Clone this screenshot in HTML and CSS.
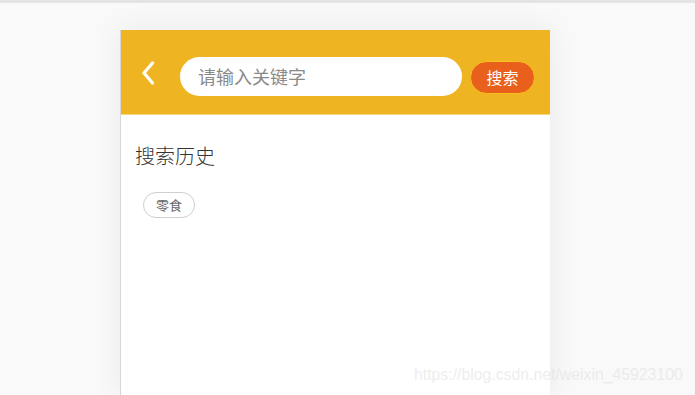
FILE: index.html
```html
<!DOCTYPE html>
<html lang="zh">
<head>
<meta charset="utf-8">
<link rel="stylesheet" href="styles.css">
</head>
<body>
<div class="topbar"></div>
<div class="page">
  <div class="card">
    <div class="header">
      <svg class="back" width="14" height="24" viewBox="0 0 14 24"><path d="M11.5 2 L3 12 L11.5 22" fill="none" stroke="#fff" stroke-width="3.2" stroke-linecap="round" stroke-linejoin="round"/></svg>
      <div class="search-input">请输入关键字</div>
      <div class="search-btn">搜索</div>
    </div>
    <div class="content">
      <div class="title">搜索历史</div>
      <div class="tags"><span class="tag">零食</span></div>
    </div>
  </div>
</div>
<div class="watermark">https://blog.csdn.net/weixin_45923100</div>
</body>
</html>
```
FILE: styles.css
```css
html, body {
  margin: 0;
  padding: 0;
  height: 100%;
  overflow: hidden;
  background: #f9f9f9;
  font-family: "Noto Sans CJK SC", "Liberation Sans", sans-serif;
}
.topbar {
  height: 3px;
  background: #e4e4e4;
}
.page {
  padding-top: 27px;
  padding-left: 120px;
}
.card {
  width: 429px;
  height: 365px;
  background: #fff;
  border-left: 1px solid #d6d6d6;
  box-shadow: 0 0 28px rgba(0, 0, 0, 0.07);
}
.header {
  height: 85px;
  background: #efb422;
  display: flex;
  align-items: flex-start;
  padding-left: 20px;
  border-bottom: 1px solid #f7d77a;
  box-sizing: border-box;
}
.back {
  display: block;
  margin-top: 31px;
}
.search-input {
  margin-top: 27px;
  margin-left: 25px;
  width: 282px;
  height: 39px;
  border-radius: 20px;
  background: #fff;
  box-sizing: border-box;
  padding-left: 18px;
  line-height: 39px;
  font-size: 18px;
  color: #8a8a8a;
}
.search-btn {
  margin-top: 31px;
  margin-left: 8px;
  width: 65px;
  height: 33px;
  box-sizing: border-box;
  border: 1px solid #f7c21a;
  border-radius: 17px;
  background: #e8601c;
  color: #fff;
  font-size: 16px;
  line-height: 31px;
  text-align: center;
}
.content {
  padding: 26px 14px 0;
}
.title {
  font-size: 20px;
  font-weight: 300;
  color: #333;
  line-height: 30px;
}
.tags {
  padding-top: 21px;
  padding-left: 8px;
  display: flex;
}
.tag {
  height: 26px;
  width: 52px;
  box-sizing: border-box;
  border: 1px solid #cfcfcf;
  border-radius: 13px;
  font-size: 13px;
  line-height: 24px;
  text-align: center;
  color: #666;
}
.watermark {
  position: absolute;
  left: 414px;
  top: 366px;
  font-family: "Liberation Sans", Arial, sans-serif;
  font-size: 15.8px;
  color: rgba(225, 225, 225, 0.6);
}
```
